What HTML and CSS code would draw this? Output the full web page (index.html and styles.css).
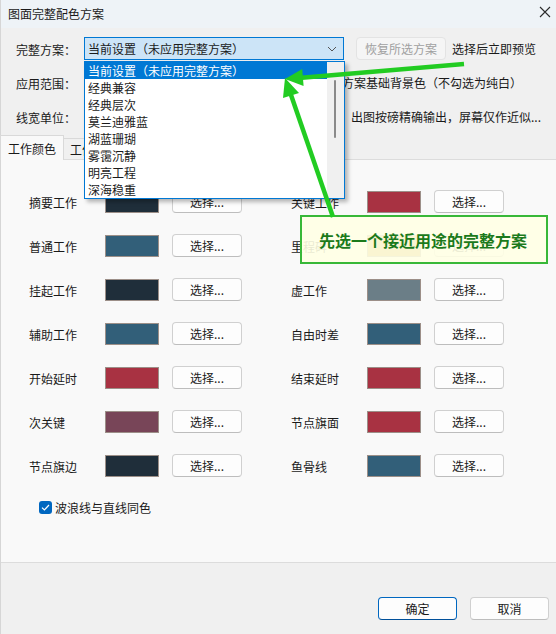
FILE: index.html
```html
<!DOCTYPE html>
<html lang="zh-CN">
<head>
<meta charset="utf-8">
<title>图面完整配色方案</title>
<link rel="stylesheet" href="styles.css">
</head>
<body>
<div class="window">
  <div class="titlebar">
    <span class="title">图面完整配色方案</span>
    <svg class="close" width="12" height="12" viewBox="0 0 12 12"><path d="M1 1 L11 11 M11 1 L1 11" stroke="#2b2b2b" stroke-width="1.1" fill="none"/></svg>
  </div>

  <div class="form">
    <div class="row">
      <span class="label">完整方案：</span>
      <div class="combo active">
        <span>当前设置（未应用完整方案）</span>
        <svg class="chev" width="10" height="6" viewBox="0 0 10 6"><path d="M1 1 L5 5 L9 1" stroke="#555" stroke-width="1" fill="none"/></svg>
      </div>
      <button class="btn disabled">恢复所选方案</button>
      <span class="note">选择后立即预览</span>
    </div>
    <div class="row">
      <span class="label">应用范围：</span>
      <div class="combo small"></div>
      <span class="note tight">方案基础背景色（不勾选为纯白）</span>
    </div>
    <div class="row">
      <span class="label">线宽单位：</span>
      <div class="combo small"></div>
      <span class="note far">出图按磅精确输出，屏幕仅作近似...</span>
    </div>
  </div>

  <div class="tabs">
    <div class="tab selected">工作颜色</div>
    <div class="tab">工作线型</div>
  </div>

  <div class="panel">
    <div class="grid">
      <div class="cell"><span class="clabel">摘要工作</span><span class="swatch c-dark"></span><button class="btn pick">选择...</button></div>
      <div class="cell"><span class="clabel">关键工作</span><span class="swatch c-red"></span><button class="btn pick">选择...</button></div>
      <div class="cell"><span class="clabel">普通工作</span><span class="swatch c-blue"></span><button class="btn pick">选择...</button></div>
      <div class="cell"><span class="clabel">里程碑</span><span class="swatch c-gold"></span><button class="btn pick">选择...</button></div>
      <div class="cell"><span class="clabel">挂起工作</span><span class="swatch c-dark"></span><button class="btn pick">选择...</button></div>
      <div class="cell"><span class="clabel">虚工作</span><span class="swatch c-gray"></span><button class="btn pick">选择...</button></div>
      <div class="cell"><span class="clabel">辅助工作</span><span class="swatch c-blue"></span><button class="btn pick">选择...</button></div>
      <div class="cell"><span class="clabel">自由时差</span><span class="swatch c-blue"></span><button class="btn pick">选择...</button></div>
      <div class="cell"><span class="clabel">开始延时</span><span class="swatch c-red"></span><button class="btn pick">选择...</button></div>
      <div class="cell"><span class="clabel">结束延时</span><span class="swatch c-red"></span><button class="btn pick">选择...</button></div>
      <div class="cell"><span class="clabel">次关键</span><span class="swatch c-plum"></span><button class="btn pick">选择...</button></div>
      <div class="cell"><span class="clabel">节点旗面</span><span class="swatch c-red"></span><button class="btn pick">选择...</button></div>
      <div class="cell"><span class="clabel">节点旗边</span><span class="swatch c-dark"></span><button class="btn pick">选择...</button></div>
      <div class="cell"><span class="clabel">鱼骨线</span><span class="swatch c-blue"></span><button class="btn pick">选择...</button></div>
    </div>
    <div class="checkrow">
      <span class="check-on"><svg width="9" height="7" viewBox="0 0 9 7"><path d="M1 3.6 L3.4 6 L8 1" stroke="#fff" stroke-width="1.2" fill="none"/></svg></span>
      <span>波浪线与直线同色</span>
    </div>
  </div>

  <div class="footer">
    <button class="btn dlg primary">确定</button>
    <button class="btn dlg">取消</button>
  </div>

  <div class="dropdown">
    <div class="items">
      <div class="item sel">当前设置（未应用完整方案）</div>
      <div class="item">经典兼容</div>
      <div class="item">经典层次</div>
      <div class="item">莫兰迪雅蓝</div>
      <div class="item">湖蓝珊瑚</div>
      <div class="item">雾霭沉静</div>
      <div class="item">明亮工程</div>
      <div class="item">深海稳重</div>
    </div>
    <div class="scrollbar"><span class="thumb"></span></div>
  </div>

  <div class="callout">先选一个接近用途的完整方案</div>

  <svg class="arrows" width="556" height="634" viewBox="0 0 556 634">
    <line x1="463" y1="64" x2="298" y2="78" stroke="#22cc22" stroke-width="4.5"/>
    <polygon points="284,79 302.6,86 301.2,69" fill="#22cc22"/>
    <line x1="332" y1="217" x2="289" y2="92" stroke="#22cc22" stroke-width="4.5"/>
    <polygon points="284,78 298,93 282,98" fill="#22cc22"/>
  </svg>
</div>
</body>
</html>
```

FILE: styles.css
```css
* { box-sizing: border-box; }
html, body { margin: 0; padding: 0; }
body {
  width: 556px;
  height: 634px;
  overflow: hidden;
  font-family: "Noto Sans CJK SC", "Noto Sans", sans-serif;
  font-size: 12px;
  color: #1a1a1a;
  background: #f0f0f0;
}
.window {
  position: relative;
  width: 556px;
  height: 634px;
  background: #f0f0f0;
  border-left: 1px solid #d6d6d6;
  display: flex;
  flex-direction: column;
}
.titlebar {
  height: 28px;
  flex: none;
  background: #eef3f7;
  display: flex;
  align-items: center;
  justify-content: space-between;
  padding: 0 5px 2px 7px;
}
.title { font-size: 12px; color: #1a1a1a; }
.close { margin-top: -2px; }

.form {
  padding: 9px 0 0 15px;
  display: flex;
  flex-direction: column;
  gap: 11px;
  flex: none;
}
.row {
  display: flex;
  align-items: center;
  height: 23px;
}
.label { width: 68px; flex: none; padding-top: 2px; }
.combo {
  height: 23px;
  width: 260px;
  border: 1px solid #0078d4;
  background: #cce4f7;
  display: flex;
  align-items: center;
  justify-content: space-between;
  padding: 0 6px 0 3px;
  flex: none;
}
.combo.small { width: 150px; background: #fff; border-color: #c8c8c8; }
.chev { margin-top: 1px; }
.btn {
  font-family: inherit;
  font-size: 12px;
  color: #1a1a1a;
  background: #fdfdfd;
  border: 1px solid #d0d0d0;
  border-bottom-color: #bdbdbd;
  border-radius: 4px;
  padding: 0;
  height: 23px;
}
.btn.disabled {
  width: 90px;
  margin-left: 12px;
  color: #a0a0a0;
  background: #f5f5f5;
  border-color: #e3e3e3;
}
.note { margin-left: 6px; white-space: nowrap; }
.note.tight { margin-left: 108px; }
.note.far { margin-left: 117px; }

.tabs {
  margin-top: 7px;
  height: 24px;
  display: flex;
  align-items: flex-end;
  flex: none;
  position: relative;
  z-index: 1;
}
.tab {
  height: 21px;
  padding: 0 6px;
  border: 1px solid #d9d9d9;
  border-bottom: none;
  background: #f0f0f0;
  display: flex;
  align-items: center;
  margin-left: -1px;
}
.tab.selected {
  height: 25px;
  margin-bottom: -1px;
  background: #f9f9f9;
  width: 64px;
  padding-left: 7px;
  margin-left: -1px;
}

.panel {
  height: 404px;
  flex: none;
  background: #f9f9f9;
  border-top: 1px solid #dcdcdc;
  border-bottom: 1px solid #dcdcdc;
  padding: 30px 0 0 28px;
}
.grid {
  display: grid;
  grid-template-columns: 262px 262px;
  row-gap: 21px;
}
.cell {
  display: flex;
  align-items: center;
  height: 23px;
}
.clabel { width: 76px; flex: none; padding-top: 2px; }
.swatch {
  width: 54px;
  height: 22px;
  border: 1px solid #9c8f88;
  flex: none;
}
.c-dark { background: #1f2e3a; }
.c-blue { background: #325f79; }
.c-red { background: #a83242; }
.c-gray { background: #6b7e87; }
.c-plum { background: #784558; }
.c-gold { background: #c99a2e; }
.btn.pick { width: 70px; margin-left: 13px; }

.checkrow {
  margin: 22px 0 0 10px;
  display: flex;
  align-items: center;
  gap: 3px;
}
.check-on {
  width: 13px; height: 13px;
  border-radius: 3px;
  background: #0067c0;
  display: flex;
  align-items: center;
  justify-content: center;
}

.footer {
  flex: 1;
  display: flex;
  justify-content: flex-end;
  align-items: flex-start;
  gap: 13px;
  padding: 34px 7px 0 0;
}
.btn.dlg { width: 79px; }
.btn.primary { border-color: #0067c0; border-bottom-color: #00509a; }

.dropdown {
  position: absolute;
  left: 83px;
  top: 61px;
  width: 261px;
  height: 138px;
  border: 1px solid #0078d4;
  background: #fff;
  display: flex;
  box-shadow: 3px 3px 4px rgba(0, 0, 0, 0.28);
  z-index: 5;
}
.items { flex: 1; }
.item {
  height: 17px;
  line-height: 17px;
  padding-left: 3px;
  white-space: nowrap;
}
.item.sel { background: #0078d4; color: #fff; }
.scrollbar {
  width: 17px;
  background: #f0f0f0;
  position: relative;
}
.thumb {
  position: absolute;
  left: 7px;
  top: 18px;
  width: 2px;
  height: 58px;
  background: #8a8a8a;
  border-radius: 1px;
}

.callout {
  position: absolute;
  left: 299px;
  top: 215px;
  width: 248px;
  height: 49px;
  border: 2px solid #38b838;
  background: rgba(255, 255, 228, 0.9);
  color: #1b7a1b;
  font-weight: bold;
  font-size: 16px;
  display: flex;
  align-items: center;
  padding-left: 17px;
  z-index: 6;
}
.arrows {
  position: absolute;
  left: 0;
  top: 0;
  pointer-events: none;
  z-index: 7;
}
```
